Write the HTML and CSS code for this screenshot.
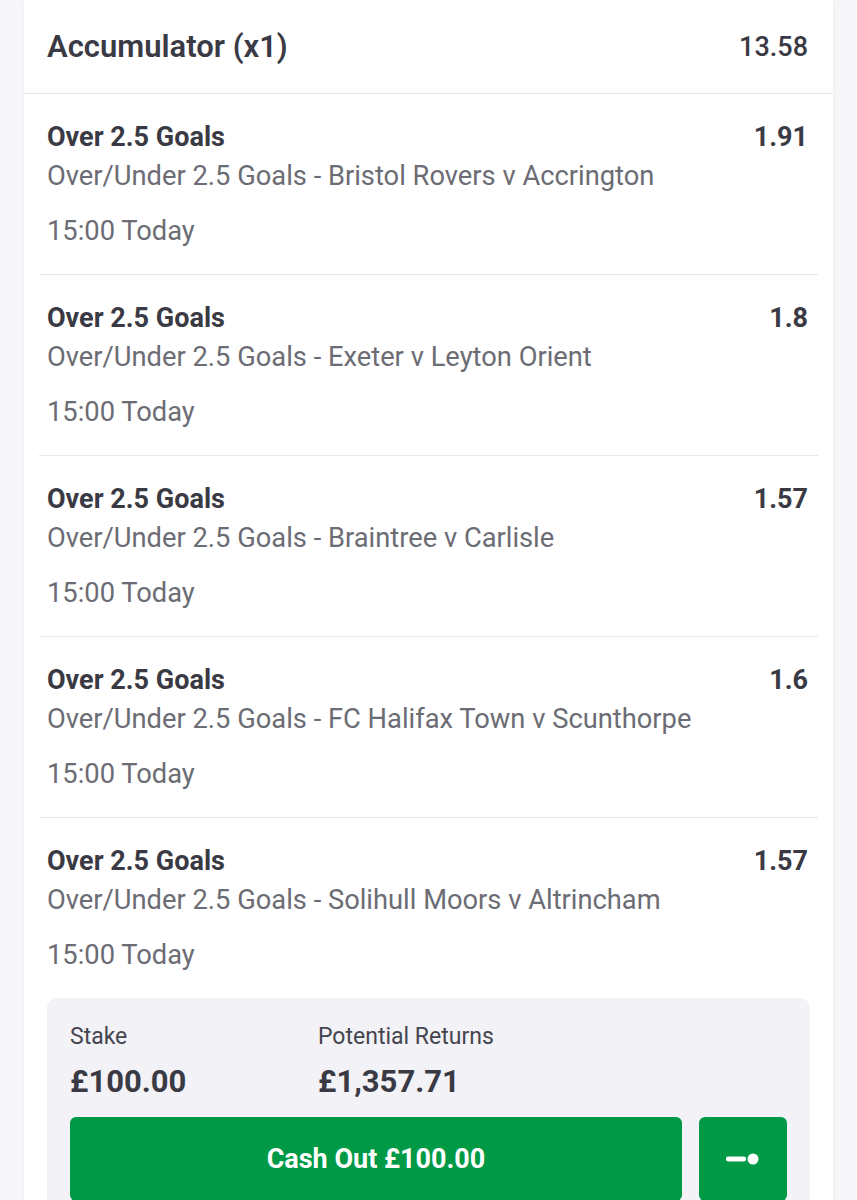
FILE: index.html
```html
<!DOCTYPE html>
<html lang="en">
<head>
    <meta charset="UTF-8">
    <meta name="viewport" content="width=device-width, initial-scale=1.0">
    <title>Accumulator (x1)</title>
    <link rel="stylesheet" href="styles.css">
</head>
<body>
    <div class="bet-card">
        <div class="bet-header">
            <h2>Accumulator (x1)</h2>
            <span class="bet-odds">13.58</span>
        </div>
        <div class="selections">
            <div class="selection">
                <div class="selection-top">
                    <span class="selection-name">Over 2.5 Goals</span>
                    <span class="selection-price">1.91</span>
                </div>
                <p class="selection-market">Over/Under 2.5 Goals - Bristol Rovers v Accrington</p>
                <p class="selection-time">15:00 Today</p>
            </div>
            <div class="selection">
                <div class="selection-top">
                    <span class="selection-name">Over 2.5 Goals</span>
                    <span class="selection-price">1.8</span>
                </div>
                <p class="selection-market">Over/Under 2.5 Goals - Exeter v Leyton Orient</p>
                <p class="selection-time">15:00 Today</p>
            </div>
            <div class="selection">
                <div class="selection-top">
                    <span class="selection-name">Over 2.5 Goals</span>
                    <span class="selection-price">1.57</span>
                </div>
                <p class="selection-market">Over/Under 2.5 Goals - Braintree v Carlisle</p>
                <p class="selection-time">15:00 Today</p>
            </div>
            <div class="selection">
                <div class="selection-top">
                    <span class="selection-name">Over 2.5 Goals</span>
                    <span class="selection-price">1.6</span>
                </div>
                <p class="selection-market">Over/Under 2.5 Goals - FC Halifax Town v Scunthorpe</p>
                <p class="selection-time">15:00 Today</p>
            </div>
            <div class="selection">
                <div class="selection-top">
                    <span class="selection-name">Over 2.5 Goals</span>
                    <span class="selection-price">1.57</span>
                </div>
                <p class="selection-market">Over/Under 2.5 Goals - Solihull Moors v Altrincham</p>
                <p class="selection-time">15:00 Today</p>
            </div>
        </div>
        <div class="stake-box">
            <div class="stake-info">
                <div class="stake-col stake-col-first">
                    <span class="stake-label">Stake</span>
                    <span class="stake-value">£100.00</span>
                </div>
                <div class="stake-col">
                    <span class="stake-label">Potential Returns</span>
                    <span class="stake-value">£1,357.71</span>
                </div>
            </div>
            <div class="stake-actions">
                <button class="btn-cashout">Cash Out £100.00</button>
                <button class="btn-slider" aria-label="Partial cash out">
                    <svg width="34" height="14" viewBox="0 0 34 14">
                        <rect x="0" y="4.5" width="20" height="5" rx="2" fill="#fff"/>
                        <circle cx="27" cy="7" r="5.5" fill="#fff"/>
                    </svg>
                </button>
            </div>
        </div>
    </div>
</body>
</html>
```

FILE: styles.css
```css
:root {
    --text-dark: #3a3a45;
    --text-grey: #6c6c74;
    --line-color: #e6e6ec;
    --panel-color: #f2f2f7;
    --green: #009a46;
}
body {
    margin: 0;
    background-color: #f7f7f9;
    font-family: 'Roboto', 'Liberation Sans', sans-serif;
    color: var(--text-dark);
}
.bet-card {
    margin: 0 24px;
    background-color: #fff;
    border-radius: 0 0 8px 8px;
    box-shadow: 0 0 6px rgba(0, 0, 0, 0.04);
    padding-bottom: 20px;
}
.bet-header {
    height: 93px;
    display: flex;
    align-items: center;
    justify-content: space-between;
    padding: 0 25px 0 23px;
    border-bottom: 1px solid var(--line-color);
}
.bet-header h2 {
    margin: 0;
    font-size: 31px;
    font-weight: 600;
    color: var(--text-dark);
}
.bet-odds {
    font-size: 27px;
    font-weight: 500;
}
.selections {
    padding: 0 15px;
}
.selection {
    padding: 28px 10px 28px 8px;
    border-bottom: 1px solid var(--line-color);
}
.selection:last-child {
    border-bottom: none;
}
.selection-top {
    display: flex;
    justify-content: space-between;
    line-height: 30px;
    font-size: 27px;
    font-weight: 700;
}
.selection-market,
.selection-time {
    margin: 0;
    line-height: 30px;
    font-size: 27.3px;
    color: var(--text-grey);
}
.selection-market {
    margin-top: 9px;
}
.selection-time {
    margin-top: 25px;
}
.stake-box {
    margin: 0 23px;
    background-color: var(--panel-color);
    border-radius: 10px;
    padding: 24px 23px 30px;
}
.stake-info {
    display: flex;
}
.stake-col {
    display: flex;
    flex-direction: column;
}
.stake-col-first {
    width: 248px;
}
.stake-label {
    font-size: 23px;
    line-height: 30px;
    color: #45454f;
}
.stake-value {
    margin-top: 13px;
    font-size: 31px;
    line-height: 34px;
    font-weight: 700;
}
.stake-actions {
    display: flex;
    gap: 17px;
    margin-top: 18px;
}
.btn-cashout,
.btn-slider {
    height: 84px;
    border: none;
    border-radius: 6px;
    background-color: var(--green);
    color: #fff;
    font-family: inherit;
}
.btn-cashout {
    flex: 1;
    font-size: 27px;
    font-weight: 700;
}
.btn-slider {
    width: 88px;
    display: flex;
    align-items: center;
    justify-content: center;
}
```
